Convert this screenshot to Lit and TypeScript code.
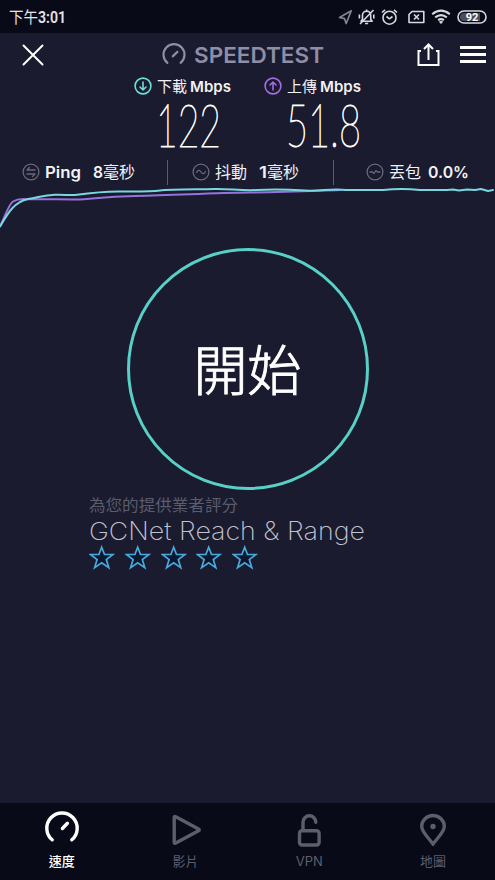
import { LitElement, html, svg, css } from 'lit';
import { customElement, property } from 'lit/decorators.js';

// One line of text, set to an exact width
@customElement('fit-text')
export class FitText extends LitElement {
  @property() text = '';
  @property({ type: Number }) width = 0;
  @property({ type: Number }) height = 20;
  @property({ type: Number }) base = 16;

  static styles = css`
    :host {
      display: block;
      flex: none;
    }

    svg {
      display: block;
      overflow: visible;
      fill: currentColor;
    }
  `;

  render() {
    return html`
      <svg width=${this.width} height=${this.height}>
        <text x="0" y=${this.base} textLength=${this.width} lengthAdjust="spacingAndGlyphs">${this.text}</text>
      </svg>
    `;
  }
}

@customElement('status-bar')
export class StatusBar extends LitElement {
  static styles = css`
    :host {
      display: flex;
      align-items: center;
      height: 33px;
      padding: 0 8px 0 9px;
      box-sizing: border-box;
      background: #090a18;
      color: #e4e4ea;
    }

    .time {
      flex: 1;
      display: flex;
      font: 600 16px Roboto, sans-serif;
    }

    .period { font: 400 15.5px 'Noto Sans CJK TC', sans-serif; }

    svg {
      display: block;
      fill: none;
      stroke: #d8d8de;
      stroke-width: 1.6;
      stroke-linejoin: round;
    }

    .arrow { stroke: #85868f; margin-right: 5px; }
    .bell { margin-right: 6px; }
    .alarm { margin-right: 10px; }
    .sim { margin-right: 6px; }
    .wifi { margin-right: 6px; }
    .solid { fill: #d8d8de; stroke: none; }

    .battery text {
      font: 700 11px Roboto, sans-serif;
      fill: #ffffff;
      stroke: none;
    }
  `;

  render() {
    return html`
      <div class="time">
        <fit-text class="period" text="下午" width="29" height="22" base="16.5"></fit-text>
        <fit-text text="3:01" width="28" height="22" base="16.5"></fit-text>
      </div>
      <svg class="arrow" width="15" height="16"><path d="M13.3 1.7L1.5 8.5l5 1.1 1.6 5z" /></svg>
      <svg class="bell" width="17" height="18">
        <path d="M3 13.2h11.2l-1.5-2V7.3C12.7 4.7 11 3.2 8.6 3.2S4.5 4.7 4.5 7.3v3.9z" />
        <path d="M7 15.5h3.2M8.6 1.5v1.5M1.4 6.5v4M15.8 6.5v4M2 16L15.5 2" />
      </svg>
      <svg class="alarm" width="17" height="18">
        <circle cx="8.5" cy="9.7" r="6.5" />
        <path d="M5.5 8.5l3 2.3 3-2.3M1 4.5l3-2.7M16 4.5l-3-2.7" />
      </svg>
      <svg class="sim" width="17" height="16">
        <path d="M4 2.5h11.8v11H1V5.5z" /><path d="M6 5.5l5 5M11 5.5l-5 5" />
      </svg>
      <svg class="wifi" width="20" height="17">
        <path stroke-width="2.1" d="M1.2 6.2q8.8-7 17.6 0M4.2 9.4q5.8-4.5 11.6 0M7.1 12.2q2.9-2.1 5.8 0" />
        <path class="solid" d="M7.7 13.7q2.3-1.3 4.6 0L10 16z" />
      </svg>
      <svg class="battery" width="30" height="14">
        <rect x="1" y="1" width="28" height="12" rx="6" />
        <path d="M6 3h17v8H6q-3-1-3-4t3-4z" fill="#4c4d58" stroke="none" />
        <text x="15" y="11" text-anchor="middle">92</text>
      </svg>
    `;
  }
}

@customElement('result-panel')
export class ResultPanel extends LitElement {
  static styles = css`
    :host {
      display: block;
      height: 197px;
      color: #f2f2f6;
      font-family: Inter, 'Noto Sans CJK TC', sans-serif;
    }

    svg {
      display: block;
      flex: none;
      overflow: visible;
      fill: none;
      stroke-linecap: round;
      stroke-linejoin: round;
    }

    header {
      display: flex;
      align-items: center;
      height: 42px;
      padding: 2px 9px 0 22px;
      box-sizing: border-box;
    }

    .close, .share, .menu { stroke: #ffffff; stroke-width: 2; }
    .share { margin-left: 93px; stroke-linecap: butt; stroke-linejoin: miter; }
    .menu { margin-left: 20px; stroke-width: 3; stroke-linecap: butt; }
    .logo { margin: 0 8px 0 118px; stroke: #8e8ea6; stroke-width: 2.9; }
    .brand { color: #8e8ea6; font-size: 22px; font-weight: 600; }

    .speeds {
      display: flex;
      gap: 33px;
      height: 81px;
      padding-left: 134px;
    }

    .label {
      display: flex;
      align-items: center;
      height: 22px;
      font-size: 15px;
    }

    .label svg { margin-right: 5px; stroke-width: 1.6; }
    .mbps { margin-left: 3px; font-weight: 600; }
    .value {
      margin: 0 0 0 22px;
      font: 200 59px Lato, sans-serif;
      color: #ffffff;
      stroke: #ffffff;
      stroke-width: 1.1px;
    }

    .metrics {
      display: flex;
      align-items: center;
      height: 32px;
      padding-left: 22px;
      font-size: 16px;
    }

    .metrics svg { margin-right: 5px; stroke: #686979; stroke-width: 1.3; }
    .metrics .strong { font-weight: 600; }
    .second { margin-left: 12px; }
    .rule { width: 1px; height: 25px; background: #5a5b6b; }
    .chart { stroke-width: 2; }
  `;

  render() {
    return html`
      <header>
        <svg class="close" width="22" height="22"><path d="M1.5 1.5l19 19M20.5 1.5l-19 19" /></svg>
        <svg class="logo" width="24" height="24" viewBox="0 0 32 32">
          <path d="M7.2 26.4a14 14 0 1 1 17.6 0" /><path d="M14.3 17.8l6.2-6" />
        </svg>
        <fit-text class="brand" text="SPEEDTEST" width="130" height="24" base="20"></fit-text>
        <svg class="share" width="23" height="24"><path d="M4 8H1.5v14h20V8H19M11.5 17V2M7 6l4.5-4.5L16 6" /></svg>
        <svg class="menu" width="26" height="20"><path d="M0 2.5h26M0 9.5h26M0 16.5h26" /></svg>
      </header>
      <div class="speeds">
        <div>
          <div class="label">
            <svg width="18" height="18" stroke="#6fdcd8"><circle cx="9" cy="9" r="7.9" /><path d="M9 5v8M6 10l3 3 3-3" /></svg>
            <fit-text text="下載" width="30" height="20" base="15.5"></fit-text>
            <fit-text class="mbps" text="Mbps" width="41" height="20" base="15.5"></fit-text>
          </div>
          <fit-text class="value" text="122" width="65" height="58" base="50"></fit-text>
        </div>
        <div>
          <div class="label">
            <svg width="18" height="18" stroke="#a56be0"><circle cx="9" cy="9" r="7.9" /><path d="M9 13V5M6 8l3-3 3 3" /></svg>
            <fit-text text="上傳" width="30" height="20" base="15.5"></fit-text>
            <fit-text class="mbps" text="Mbps" width="41" height="20" base="15.5"></fit-text>
          </div>
          <fit-text class="value" text="51.8" width="75" height="58" base="50"></fit-text>
        </div>
      </div>
      <div class="metrics">
        <svg width="18" height="18"><circle cx="9" cy="9" r="7.9" /><path d="M13 7H5l2.5-2.5M5 11h8l-2.5 2.5" /></svg>
        <fit-text class="strong" text="Ping" width="36" height="20" base="15.5"></fit-text>
        <fit-text class="second strong" text="8" width="10" height="20" base="15.5"></fit-text>
        <fit-text text="毫秒" width="32" height="20" base="15.5"></fit-text>
        <div class="rule" style="margin: 0 24px 0 32px"></div>
        <svg width="18" height="18"><circle cx="9" cy="9" r="7.9" /><path d="M4.5 9.5q2.2-4 4.5-.5t4.5-.5" /></svg>
        <fit-text text="抖動" width="32" height="20" base="15.5"></fit-text>
        <fit-text class="second strong" text="1" width="8" height="20" base="15.5"></fit-text>
        <fit-text text="毫秒" width="32" height="20" base="15.5"></fit-text>
        <div class="rule" style="margin: 0 32px 0 34px"></div>
        <svg width="18" height="18"><circle cx="9" cy="9" r="7.9" /><path d="M4 9h2.5l1 1M8 10.5l2-3M10.5 8l1 1H14" /></svg>
        <fit-text text="丟包" width="32" height="20" base="15.5"></fit-text>
        <fit-text class="strong" text="0.0%" width="41" height="20" base="15.5" style="margin-left: 7px"></fit-text>
      </div>
      <svg class="chart" width="495" height="42">
        <path stroke="#9672dc" d="M0 38C4 32 8 17 13 13.5Q18 10.5 26 11.2C45 11 60 11.5 75 11.5C95 11 100 8.5 135 8C180 7 210 5 250 4.5S310 3 340 2" />
        <path stroke="#78d7df" d="M0 38.500C8 25 14 14 28 11C40 9 44 7 55 6.700S67 7.500 75 7C90 5 105 3.500 118 3.500S149 4 160 2.500S200 1.500 214 1S242 3 257 2S290 1.500 305 2.500S332 0 346 2H383Q402 0 420 2H447L453 1.500L459 2.500L467 1.500L475 2L481 1L488 3L493 2" />
      </svg>
    `;
  }
}

@customElement('provider-rating')
export class ProviderRating extends LitElement {
  static styles = css`
    :host {
      display: block;
      padding: 5px 0 0 89px;
      font-family: 'Noto Sans CJK TC', sans-serif;
    }

    .hint { color: #5b5c6e; font-size: 16px; }
    .name {
      color: #c2c3d0;
      font: 200 25px Inter, sans-serif;
    }

    .stars { display: flex; gap: 9.8px; }
    .stars svg {
      display: block;
      fill: #0b1830;
      stroke: #4aa9dc;
      stroke-width: 1.7;
    }
  `;

  render() {
    return html`
      <fit-text class="hint" text="為您的提供業者評分" width="149" height="22" base="16"></fit-text>
      <fit-text class="name" text="GCNet Reach &amp; Range" width="276" height="28" base="22.5"></fit-text>
      <div class="stars">
        ${[1, 2, 3, 4, 5].map(() => html`
          <svg width="26" height="25" viewBox="0 0 26 25">
            <path d="M12.7 2.2L15.5 9.5H24L17.3 14.5L19.8 22.7L12.7 17.9L5.6 22.7L8.1 14.5L1.4 9.5H9.9Z" />
          </svg>
        `)}
      </div>
    `;
  }
}

@customElement('tab-bar')
export class TabBar extends LitElement {
  static styles = css`
    :host {
      display: flex;
      height: 77px;
      background: #080a18;
    }

    .tab {
      flex: 1;
      display: flex;
      flex-direction: column;
      align-items: center;
      padding-top: 7px;
      color: #5d5e6d;
      font: 400 13px/20px 'Noto Sans CJK TC', sans-serif;
    }

    .tab.active { color: #ffffff; font-weight: 500; }
    .latin { font-family: Inter, sans-serif; }

    svg {
      display: block;
      margin-bottom: 5px;
      overflow: visible;
      fill: none;
      stroke: currentColor;
      stroke-width: 3.4;
      stroke-linecap: round;
      stroke-linejoin: round;
    }

    .dot { fill: currentColor; stroke: none; }
  `;

  tabs = [
    { label: '速度', cls: 'tab active', icon: svg`<path d="M6.2 29.8a15.2 15.2 0 1 1 19.6 0" /><path d="M16.4 18.5l5-5.2" />` },
    { label: '影片', cls: 'tab', icon: svg`<path d="M5.8 6.7Q4.2 5.7 4.2 7.5V32Q4.2 33.900 5.8 32.900L28.500 20.800Q30 19.900 28.500 19Z" />` },
    { label: 'VPN', cls: 'tab latin', icon: svg`<rect x="6.500" y="20.700" width="19.600" height="14.300" rx="2.500" /><path d="M10 20V12.200a6.400 6.400 0 0 1 12.800 0" />` },
    { label: '地圖', cls: 'tab', icon: svg`<path d="M16 34.200C12 28 4.700 22.500 4.700 16.300a11.300 10.800 0 0 1 22.600 0C27.300 22.500 20 28 16 34.200z" /><circle class="dot" cx="16" cy="16.500" r="2.700" />` },
  ];

  render() {
    return this.tabs.map(tab => html`
      <div class=${tab.cls}>
        <svg width="34" height="36" viewBox="-1 0 34 36">${tab.icon}</svg>
        ${tab.label}
      </div>
    `);
  }
}

@customElement('app-root')
export class AppRoot extends LitElement {
  static styles = css`
    :host {
      display: flex;
      flex-direction: column;
      height: 880px;
      background: #1a1b2e;
    }

    .start {
      flex: none;
      align-self: center;
      width: 242px;
      height: 242px;
      margin-top: 18px;
      padding: 0 0 3px;
      border: 3px solid #58d0c8;
      border-radius: 50%;
      background: none;
      color: #ffffff;
      font: 300 54px/1 'Noto Sans CJK TC', sans-serif;
      -webkit-text-stroke: 0.9px #ffffff;
      box-sizing: border-box;
    }

    provider-rating { flex: 1; }
  `;

  render() {
    return html`
      <status-bar></status-bar>
      <result-panel></result-panel>
      <button class="start">開始</button>
      <provider-rating></provider-rating>
      <tab-bar></tab-bar>
    `;
  }
}
